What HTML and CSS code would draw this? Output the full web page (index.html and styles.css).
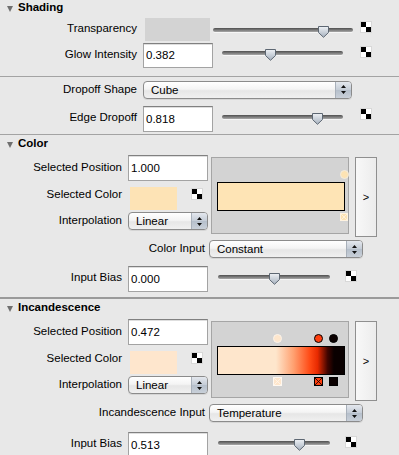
FILE: index.html
```html
<!DOCTYPE html>
<html>
<head>
<meta charset="utf-8">
<title>Shading</title>
<link rel="stylesheet" href="styles.css">
</head>
<body>
<div class="panel">

  <div class="hdr"><span class="tri"></span><span>Shading</span></div>

  <div class="row r-transp">
    <div class="lbl l137 lift">Transparency</div>
    <div class="swatch sw-grey"></div>
    <div class="slider sl-transp"><div class="track"></div><svg class="thumb" style="left:103.5px" width="13" height="12" viewBox="0 0 13 12"><defs><linearGradient id="tg1" x1="0" y1="0" x2="0" y2="1"><stop offset="0" stop-color="#eef1f5"/><stop offset="1" stop-color="#a6b1be"/></linearGradient></defs><path d="M1.5 0.5H11.5V6.5L6.5 11.3L1.5 6.5Z" fill="url(#tg1)" stroke="#5d6772"/></svg></div>
    <span class="chk chk-shade"></span>
  </div>

  <div class="row r-glow">
    <div class="lbl l137 lift">Glow Intensity</div>
    <div class="tf tf70">0.382</div>
    <div class="slider sl-in sl-121"><div class="track"></div><svg class="thumb" style="left:41.5px" width="13" height="12" viewBox="0 0 13 12"><path d="M1.5 0.5H11.5V6.5L6.5 11.3L1.5 6.5Z" fill="url(#tg1)" stroke="#5d6772"/></svg></div>
    <span class="chk chk-shade2"></span>
  </div>

  <div class="sep sep-inner"></div>

  <div class="row r-drop">
    <div class="lbl l137 lift1">Dropoff Shape</div>
    <div class="dd dd-wide"><span class="dd-text">Cube</span><span class="dd-arr"><svg width="7" height="11" viewBox="0 0 7 11"><path d="M3.5 1L6 4H1Z M1 7H6L3.5 10Z" fill="#111"/></svg></span></div>
  </div>

  <div class="row r-edge">
    <div class="lbl l137 lift">Edge Dropoff</div>
    <div class="tf tf70 tf26">0.818</div>
    <div class="slider sl-in sl-121"><div class="track"></div><svg class="thumb" style="left:88.5px" width="13" height="12" viewBox="0 0 13 12"><path d="M1.5 0.5H11.5V6.5L6.5 11.3L1.5 6.5Z" fill="url(#tg1)" stroke="#5d6772"/></svg></div>
    <span class="chk chk-shade3"></span>
  </div>

  <div class="sep sep-sec"></div>

  <!-- Color -->
  <div class="hdr hdr-c"><span class="tri"></span><span>Color</span></div>

  <div class="gblock">
    <div class="gcol">
      <div class="row g1">
        <div class="lbl l122 lift1">Selected Position</div>
        <div class="tf tf80 tf26">1.000</div>
      </div>
      <div class="row g2">
        <div class="lbl l122 lbl-g2">Selected Color</div>
        <div class="swatch sw-sel sw-peach"></div>
        <span class="chk chk-g2"></span>
      </div>
      <div class="row g3">
        <div class="lbl l122 lbl-g3">Interpolation</div>
        <div class="dd dd80"><span class="dd-text">Linear</span><span class="dd-arr"><svg width="7" height="11" viewBox="0 0 7 11"><path d="M3.5 1L6 4H1Z M1 7H6L3.5 10Z" fill="#111"/></svg></span></div>
      </div>
    </div>
    <div class="ramp">
      <div class="ramp-bar bar-color"></div>
      <svg class="hnd hc" style="left:127.5px" width="9" height="9" viewBox="0 0 9 9"><circle cx="4.5" cy="4.5" r="4" fill="#fde3b3" stroke="#f3ecdf"/></svg>
      <svg class="hnd hs" style="left:128px" width="8" height="8" viewBox="0 0 8 8"><rect x="0.5" y="0.5" width="7" height="7" fill="#fde3b3" stroke="#fff3e0"/><path d="M1 1L7 7M7 1L1 7" stroke="#fff5e6" stroke-width="0.8"/></svg>
    </div>
    <div class="rbtn">&gt;</div>
  </div>

  <div class="row r-input">
    <div class="lbl l205 lift1">Color Input</div>
    <div class="dd dd-in"><span class="dd-text">Constant</span><span class="dd-arr"><svg width="7" height="11" viewBox="0 0 7 11"><path d="M3.5 1L6 4H1Z M1 7H6L3.5 10Z" fill="#111"/></svg></span></div>
  </div>

  <div class="row r-bias">
    <div class="lbl l122 lift">Input Bias</div>
    <div class="tf tf80 tf26">0.000</div>
    <div class="slider sl-in sl-112"><div class="track"></div><svg class="thumb" style="left:49.5px" width="13" height="12" viewBox="0 0 13 12"><path d="M1.5 0.5H11.5V6.5L6.5 11.3L1.5 6.5Z" fill="url(#tg1)" stroke="#5d6772"/></svg></div>
    <span class="chk chk-bias"></span>
  </div>

  <div class="sep sep-major"></div>

  <!-- Incandescence -->
  <div class="hdr"><span class="tri"></span><span>Incandescence</span></div>

  <div class="gblock">
    <div class="gcol">
      <div class="row g1">
        <div class="lbl l122 lift1">Selected Position</div>
        <div class="tf tf80 tf26">0.472</div>
      </div>
      <div class="row g2">
        <div class="lbl l122 lbl-g2">Selected Color</div>
        <div class="swatch sw-sel sw-light"></div>
        <span class="chk chk-g2"></span>
      </div>
      <div class="row g3">
        <div class="lbl l122 lbl-g3">Interpolation</div>
        <div class="dd dd80"><span class="dd-text">Linear</span><span class="dd-arr"><svg width="7" height="11" viewBox="0 0 7 11"><path d="M3.5 1L6 4H1Z M1 7H6L3.5 10Z" fill="#111"/></svg></span></div>
      </div>
    </div>
    <div class="ramp">
      <div class="ramp-bar bar-incand"></div>
      <svg class="hnd hc" style="left:60.5px" width="9" height="9" viewBox="0 0 9 9"><circle cx="4.5" cy="4.5" r="4" fill="#fee6cc" stroke="#fbf3ea"/></svg>
      <svg class="hnd hc" style="left:101.5px" width="9" height="9" viewBox="0 0 9 9"><circle cx="4.5" cy="4.5" r="4" fill="#ff3f0f" stroke="#000"/></svg>
      <svg class="hnd hc" style="left:116.5px" width="9" height="9" viewBox="0 0 9 9"><circle cx="4.5" cy="4.5" r="4" fill="#0a0000" stroke="#000"/></svg>
      <svg class="hnd hs" style="left:61px" width="9" height="9" viewBox="0 0 9 9"><rect x="0.5" y="0.5" width="8" height="8" fill="#fee6cc" stroke="#fff8f0"/><path d="M1 1L8 8M8 1L1 8" stroke="#fff6ec" stroke-width="0.8"/></svg>
      <svg class="hnd hs" style="left:102px" width="9" height="9" viewBox="0 0 9 9"><rect x="0.5" y="0.5" width="8" height="8" fill="#ff3f0f" stroke="#000"/><path d="M1 1L8 8M8 1L1 8" stroke="#000" stroke-width="0.8"/></svg>
      <svg class="hnd hs" style="left:117px" width="9" height="9" viewBox="0 0 9 9"><rect x="0.5" y="0.5" width="8" height="8" fill="#0a0000" stroke="#000"/></svg>
    </div>
    <div class="rbtn">&gt;</div>
  </div>

  <div class="row r-input">
    <div class="lbl l205 lift1">Incandescence Input</div>
    <div class="dd dd-in"><span class="dd-text">Temperature</span><span class="dd-arr"><svg width="7" height="11" viewBox="0 0 7 11"><path d="M3.5 1L6 4H1Z M1 7H6L3.5 10Z" fill="#111"/></svg></span></div>
  </div>

  <div class="row r-bias r-bias2">
    <div class="lbl l122 lift">Input Bias</div>
    <div class="tf tf80 tf26">0.513</div>
    <div class="slider sl-in sl-112"><div class="track"></div><svg class="thumb" style="left:74.5px" width="13" height="12" viewBox="0 0 13 12"><path d="M1.5 0.5H11.5V6.5L6.5 11.3L1.5 6.5Z" fill="url(#tg1)" stroke="#5d6772"/></svg></div>
    <span class="chk chk-bias"></span>
  </div>

</div>
</body>
</html>
```

FILE: styles.css
```css
* { box-sizing: border-box; }

html, body {
  margin: 0;
  padding: 0;
}

body {
  background: #e8e8e8;
  font-family: "Liberation Sans", Arial, sans-serif;
  font-size: 11.5px;
  color: #000;
  width: 399px;
  height: 455px;
  overflow: hidden;
}

/* section header */
.hdr {
  display: flex;
  align-items: center;
  height: 14px;
  line-height: 14px;
  font-weight: bold;
  margin-top: 1px;
}
.panel > .hdr:first-child { margin-top: 0; }

.tri {
  width: 0;
  height: 0;
  border-left: 3.5px solid transparent;
  border-right: 3.5px solid transparent;
  border-top: 6px solid #6f6f6f;
  margin: 4px 5px 0 7px;
}

/* rows */
.row {
  display: flex;
  align-items: center;
}

.lbl {
  flex: none;
  text-align: right;
  white-space: nowrap;
  line-height: 14px;
}
.lift { padding-bottom: 4px; }
.lift1 { padding-bottom: 2px; }

.l137 { width: 137px; }
.l122 { width: 122px; }
.l205 { width: 205px; }

/* text fields */
.tf {
  flex: none;
  height: 25px;
  background: #fff;
  border: 1px solid #a3a3a3;
  border-top-color: #808080;
  box-shadow: inset 0 1px 0 #dedede;
  padding-left: 2px;
  line-height: 23px;
  margin-left: 6px;
}
.tf26 { height: 26px; line-height: 24px; }
.tf70 { width: 70px; }
.tf80 { width: 80px; }

/* swatches */
.swatch { flex: none; }
.sw-grey {
  width: 65px;
  height: 23px;
  margin-left: 8px;
  background: #d3d3d3;
}
.sw-sel {
  width: 47px;
  height: 23px;
  margin-left: 8px;
  margin-top: 6px;
}
.sw-peach { background: #fde3b5; }
.sw-light { background: #fee6cd; }

/* sliders */
.slider {
  flex: none;
  position: relative;
  height: 16px;
}
.track {
  position: absolute;
  left: 0;
  right: 0;
  top: 6px;
  height: 4px;
  border-radius: 2px;
  background: linear-gradient(#4f4f4f, #7a7a7a 50%, #a9a9a9);
  box-shadow: 0 1px 0 rgba(255,255,255,0.6);
}
.thumb {
  position: absolute;
  top: 4px;
}
.sl-transp { width: 140px; margin-left: 3px; }
.sl-in { margin-bottom: 5px; }
.sl-121 { width: 121px; margin-left: 9px; }
.sl-112 { width: 112px; margin-left: 10px; }

/* checker (map) icon */
.chk {
  flex: none;
  width: 10px;
  height: 10px;
  background: conic-gradient(#fff 0 25%, #000 0 50%, #fff 0 75%, #000 0);
  outline: 1px solid #d8d8d8;
}
.chk-shade { margin-left: 8px; margin-bottom: 5px; }
.chk-shade2 { margin-left: 18px; margin-bottom: 7px; }
.chk-shade3 { margin-left: 18px; margin-bottom: 10px; }
.chk-bias { margin-left: 16px; margin-bottom: 6px; }
.chk-g2 { margin-left: 15px; margin-top: 8px; }

/* separators */
.sep { background: #a3a3a3; height: 1px; }
.sep-inner { margin-top: 8px; }
.sep-sec { margin-top: 2px; }
.sep-major {
  margin-top: 5px;
  height: 2px;
  background: #9a9a9a;
}

/* dropdowns */
.dd {
  flex: none;
  display: flex;
  align-items: stretch;
  height: 18px;
  border: 1px solid #8b8b8b;
  border-radius: 4px;
  background: linear-gradient(#ffffff, #f4f4f4 45%, #e6e6e6 55%, #f0f0f0);
  box-shadow: 0 1px 0 rgba(0,0,0,0.08);
  margin-left: 6px;
  overflow: hidden;
}
.dd-text {
  flex: 1;
  padding-left: 7px;
  line-height: 16px;
  white-space: nowrap;
}
.dd-arr {
  flex: none;
  width: 16px;
  display: flex;
  align-items: center;
  justify-content: center;
  border-left: 1px solid #a8b0ba;
  background: linear-gradient(#e4e8ee, #c4ccd6 50%, #b5bfcb 51%, #c9d0d9);
}
.dd-wide { width: 209px; }
.dd80 { width: 80px; }
.dd-in { width: 154px; margin-left: 4px; }

/* rows - shading */
.r-transp { height: 25px; margin-top: 3px; }
.r-glow { height: 25px; margin-top: 1px; }
.r-drop { height: 25px; }
.r-edge { height: 26px; margin-top: 4px; }

/* gradient block */
.gblock {
  display: flex;
  align-items: flex-start;
  margin-top: 5px;
  height: 82px;
}
.gcol {
  flex: none;
  width: 208px;
}
.g1 { height: 26px; }
.g2 { height: 30px; align-items: flex-start; }
.g3 { height: 26px; align-items: flex-start; }
.lbl-g2 { margin-top: 6px; }
.lbl-g3 { margin-top: 2px; }
.g3 .dd { margin-top: 1px; }

.ramp {
  flex: none;
  position: relative;
  width: 138px;
  height: 77px;
  margin-left: 3px;
  margin-top: 2px;
  background: #d3d3d3;
  border: 1px solid #a5a5a5;
}
.ramp-bar {
  margin: 24px 0 0 5px;
  width: 128px;
  height: 29px;
  border: 1px solid #000;
}
.bar-color { background: #fee4b5; }
.bar-incand {
  background: linear-gradient(to right,
    #fee6cc 0%, #fee6cc 46%, #ffa070 60%, #ff4a15 73%, #e82a00 79%, #400500 87%, #0a0000 92%, #0a0000 100%);
}
.hnd { position: absolute; display: block; }
.hc { top: 12px; }
.hs { top: 55px; }

.rbtn {
  flex: none;
  width: 22px;
  height: 80px;
  margin-left: 6px;
  margin-top: 2px;
  border: 1px solid #8f8f8f;
  background: linear-gradient(to right, #f8f8f8, #ececec);
  display: flex;
  align-items: center;
  justify-content: center;
  font-size: 11px;
}

/* input / bias rows */
.r-input { height: 18px; margin-top: 3px; }
.r-bias { height: 26px; margin-top: 8px; }
.r-bias2 { margin-top: 10px; }
```
